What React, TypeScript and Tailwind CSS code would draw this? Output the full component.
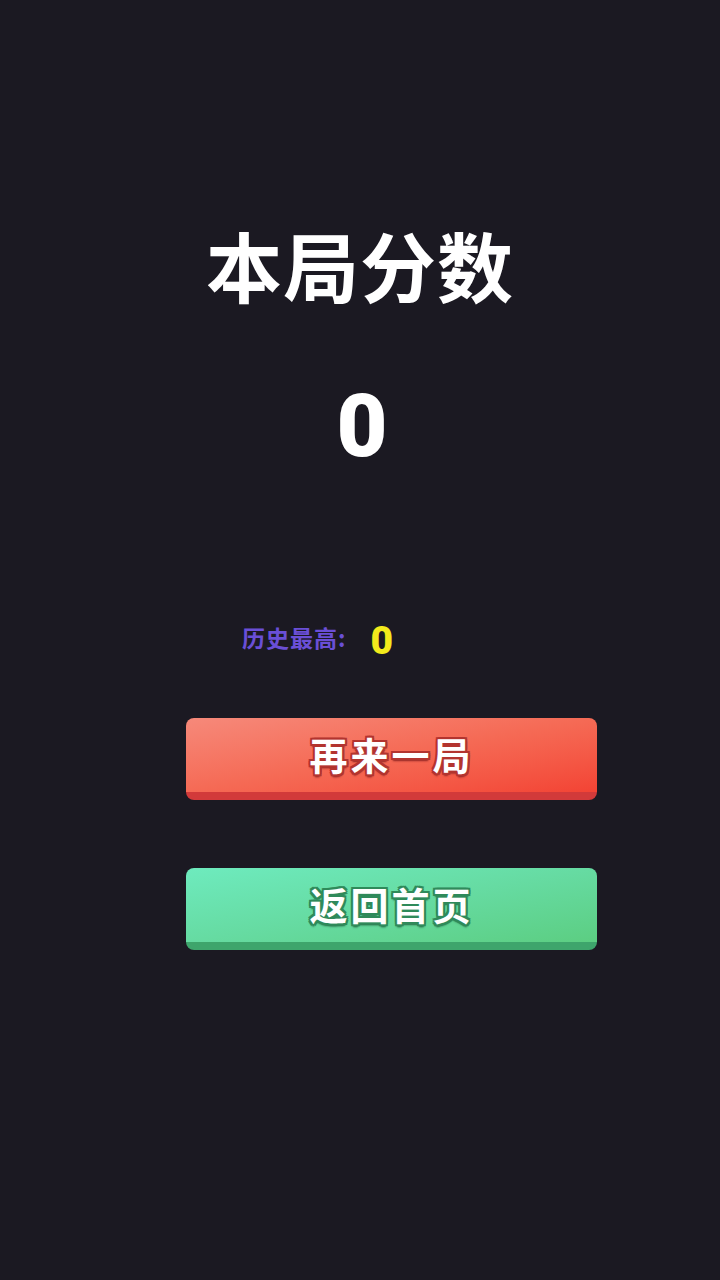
export default function App() {
  const redStroke =
    "[text-shadow:2px_0_0_#b3342f,-2px_0_0_#b3342f,0_2px_0_#b3342f,0_-2px_0_#b3342f,2px_2px_0_#b3342f,-2px_-2px_0_#b3342f,2px_-2px_0_#b3342f,-2px_2px_0_#b3342f,0_3px_2px_#8f2422]";
  const greenStroke =
    "[text-shadow:2px_0_0_#2f8a5a,-2px_0_0_#2f8a5a,0_2px_0_#2f8a5a,0_-2px_0_#2f8a5a,2px_2px_0_#2f8a5a,-2px_-2px_0_#2f8a5a,2px_-2px_0_#2f8a5a,-2px_2px_0_#2f8a5a,0_3px_2px_#236b45]";

  return (
    <div className="min-h-[1280px] w-full bg-[#1b1922] font-['Noto_Sans_CJK_SC','Noto_Sans',sans-serif] text-white">
      <div className="flex flex-col items-center pt-[218px]">
        <h1 className="text-[76px] font-bold leading-[92px] tracking-[1px]">本局分数</h1>
        <div className="ml-[4px] mt-[66px] font-['Roboto','Noto_Sans',sans-serif] text-[88px] font-black leading-[100px]">
          0
        </div>
      </div>

      <div className="mt-[138px] flex items-center pl-[242px]">
        <span className="text-[23px] font-bold tracking-[1px] text-[#6a4fd6]">历史最高:</span>
        <span className="ml-[24px] mt-[8px] font-['Roboto',sans-serif] text-[39px] font-black leading-none text-[#f3ea1c]">
          0
        </span>
      </div>

      <div className="ml-[186px] mt-[57px] flex w-[411px] flex-col gap-[68px]">
        <button className="flex h-[82px] w-full items-center justify-center rounded-[8px] border-b-[8px] border-[#d23a3a] bg-gradient-to-br from-[#f6897a] via-[#f56a55] to-[#f34334] pb-[4px]">
          <span className={`text-[38px] font-bold tracking-[3px] text-white ${redStroke}`}>再来一局</span>
        </button>
        <button className="flex h-[82px] w-full items-center justify-center rounded-[8px] border-b-[8px] border-[#3ea56c] bg-gradient-to-br from-[#6eebbe] via-[#66dba2] to-[#5cce82] pb-[4px]">
          <span className={`text-[38px] font-bold tracking-[3px] text-white ${greenStroke}`}>返回首页</span>
        </button>
      </div>
    </div>
  );
}
